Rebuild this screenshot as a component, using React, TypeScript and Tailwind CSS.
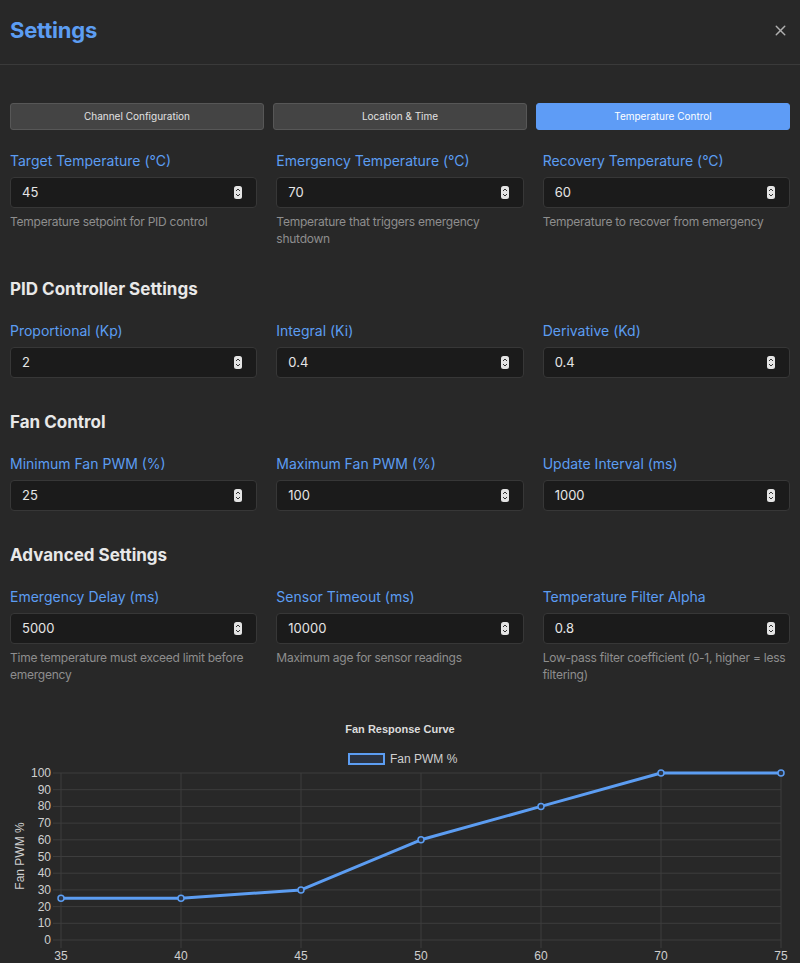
import { X } from 'lucide-react';

type Field = { label: string; value: string; hint?: string };

const tabs = ['Channel Configuration', 'Location & Time', 'Temperature Control'];

const tempFields: Field[] = [
  { label: 'Target Temperature (°C)', value: '45', hint: 'Temperature setpoint for PID control' },
  { label: 'Emergency Temperature (°C)', value: '70', hint: 'Temperature that triggers emergency shutdown' },
  { label: 'Recovery Temperature (°C)', value: '60', hint: 'Temperature to recover from emergency' },
];

const pidFields: Field[] = [
  { label: 'Proportional (Kp)', value: '2' },
  { label: 'Integral (Ki)', value: '0.4' },
  { label: 'Derivative (Kd)', value: '0.4' },
];

const fanFields: Field[] = [
  { label: 'Minimum Fan PWM (%)', value: '25' },
  { label: 'Maximum Fan PWM (%)', value: '100' },
  { label: 'Update Interval (ms)', value: '1000' },
];

const advancedFields: Field[] = [
  { label: 'Emergency Delay (ms)', value: '5000', hint: 'Time temperature must exceed limit before emergency' },
  { label: 'Sensor Timeout (ms)', value: '10000', hint: 'Maximum age for sensor readings' },
  { label: 'Temperature Filter Alpha', value: '0.8', hint: 'Low-pass filter coefficient (0-1, higher = less filtering)' },
];

// fan curve points: temp label, pwm %
const curve: [string, number][] = [
  ['35', 25],
  ['40', 25],
  ['45', 30],
  ['50', 60],
  ['60', 80],
  ['70', 100],
  ['75', 100],
];

function Spinner() {
  return (
    <svg width="8" height="13" viewBox="0 0 8 13">
      <rect x="0" y="0" width="8" height="13" rx="2.5" fill="#e4e4e4" />
      <path d="M2 5 L4 3 L6 5" fill="none" stroke="#333" strokeWidth="1" />
      <path d="M2 8 L4 10 L6 8" fill="none" stroke="#333" strokeWidth="1" />
    </svg>
  );
}

function FieldGrid({ fields }: { fields: Field[] }) {
  return (
    <div className="grid grid-cols-3 gap-x-[19px] items-start">
      {fields.map((f) => (
        <div key={f.label}>
          <div className="text-[14px] leading-[20px] text-[#5c9df2] mt-[1px] mb-[6px]">{f.label}</div>
          <div className="h-[31px] rounded-[4px] bg-[#1b1b1b] border border-[#373737] flex items-center justify-between pl-[11px] pr-[14px]">
            <span className="text-[13px] text-[#e6e6e6]">{f.value}</span>
            <Spinner />
          </div>
          {f.hint && (
            <div className="mt-[5px] text-[12px] leading-[17px] tracking-[-0.25px] text-[#8e8e8e]">{f.hint}</div>
          )}
        </div>
      ))}
    </div>
  );
}

function FanChart() {
  const left = 61;
  const step = 120;
  const top = 73;
  const bottom = 240;
  const yOf = (v: number) => bottom - (v * (bottom - top)) / 100;
  const ticks = [0, 10, 20, 30, 40, 50, 60, 70, 80, 90, 100];
  const pts = curve.map(([, v], i) => [left + i * step, yOf(v)] as const);

  return (
    <svg width="800" height="270" viewBox="0 0 800 270" className="block" style={{ fontFamily: '"Liberation Sans", Arial, sans-serif' }}>
      <text x="400" y="33" textAnchor="middle" fontSize="11" fontWeight="bold" fill="#dcdcdc">
        Fan Response Curve
      </text>
      <rect x="349" y="54" width="35" height="10" fill="#2b3342" stroke="#5c9df2" strokeWidth="2" />
      <text x="390" y="62.5" fontSize="12" fill="#cfcfcf">
        Fan PWM %
      </text>

      {ticks.map((t) => (
        <g key={t}>
          <line x1={53} x2={781} y1={yOf(t)} y2={yOf(t)} stroke="#3d3d3d" strokeWidth="1" />
          <text x="51" y={yOf(t) + 4} textAnchor="end" fontSize="12" fill="#cfcfcf">
            {t}
          </text>
        </g>
      ))}
      {curve.map(([lbl], i) => (
        <g key={lbl}>
          <line x1={left + i * step} x2={left + i * step} y1={top} y2={bottom + 8} stroke="#3d3d3d" strokeWidth="1" />
          <text x={left + i * step} y="260" textAnchor="middle" fontSize="12" fill="#cfcfcf">
            {lbl}
          </text>
        </g>
      ))}

      <text x="0" y="0" fontSize="12" fill="#cfcfcf" textAnchor="middle" transform="translate(24 156) rotate(-90)">
        Fan PWM %
      </text>

      <polyline points={pts.map((p) => p.join(',')).join(' ')} fill="none" stroke="#5c9df2" strokeWidth="3" strokeLinejoin="round" />
      {pts.map(([x, y], i) => (
        <circle key={i} cx={x} cy={y} r="3" fill="#2b3342" stroke="#5c9df2" strokeWidth="1.5" />
      ))}
    </svg>
  );
}

export default function App() {
  return (
    <div className="min-h-screen bg-[#282828] overflow-hidden" style={{ fontFamily: 'Inter, "Noto Sans", sans-serif' }}>
      <div className="h-[65px] flex items-center justify-between px-[10px] pb-1 border-b border-[#3a3a3a]">
        <h1 className="text-[22px] font-bold text-[#5c9df2] tracking-[-0.2px]">Settings</h1>
        <X size={17} strokeWidth={2} className="text-[#b0b0b0] mr-[1px]" />
      </div>

      <div className="px-[10px] pt-[38px]">
        <div className="grid grid-cols-3 gap-[9px] mb-5">
          {tabs.map((t, i) => (
            <button
              key={t}
              className={
                i === 2
                  ? 'h-[27px] rounded-[3px] bg-[#5e9cf6] border border-[#5e9cf6] text-[10px] text-white'
                  : 'h-[27px] rounded-[3px] bg-[#444444] border border-[#575757] text-[10px] text-[#e2e2e2]'
              }
            >
              {t}
            </button>
          ))}
        </div>

        <FieldGrid fields={tempFields} />

        <h2 className="mt-[30px] mb-[19px] text-[17px] leading-[24px] font-bold text-[#e8e8e8]">PID Controller Settings</h2>
        <FieldGrid fields={pidFields} />

        <h2 className="mt-[32px] mb-[19px] text-[17px] leading-[24px] font-bold text-[#e8e8e8]">Fan Control</h2>
        <FieldGrid fields={fanFields} />

        <h2 className="mt-[32px] mb-[19px] text-[17px] leading-[24px] font-bold text-[#e8e8e8]">Advanced Settings</h2>
        <FieldGrid fields={advancedFields} />
      </div>

      <div className="mt-[17px]">
        <FanChart />
      </div>
    </div>
  );
}
